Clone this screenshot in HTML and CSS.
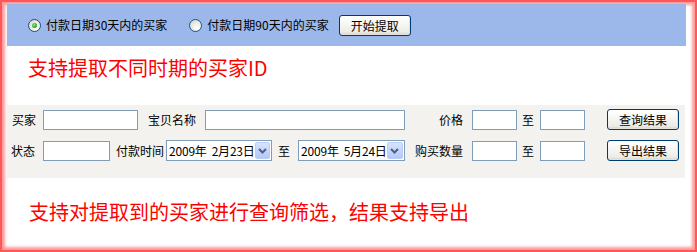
FILE: index.html
```html
<!DOCTYPE html>
<html lang="zh">
<head>
<meta charset="utf-8">
<link rel="stylesheet" href="styles.css">
</head>
<body>
<div class="frame">
  <div class="header">
    <label class="radio-item first">
      <span class="radio checked"><span class="dot"></span></span>
      <span class="rlabel">付款日期30天内的买家</span>
    </label>
    <label class="radio-item second">
      <span class="radio"></span>
      <span class="rlabel">付款日期90天内的买家</span>
    </label>
    <button class="btn start">开始提取</button>
  </div>
  <div class="note note-top">支持提取不同时期的买家ID</div>
  <div class="panel">
    <div class="row">
      <span class="lbl l-buyer">买家</span>
      <span class="input w95 ml7"></span>
      <span class="lbl ml10">宝贝名称</span>
      <span class="input w200 ml9"></span>
      <span class="lbl ml34">价格</span>
      <span class="input w45 ml9"></span>
      <span class="lbl ml5">至</span>
      <span class="input w45 ml6"></span>
      <button class="btn ml22">查询结果</button>
    </div>
    <div class="row">
      <span class="lbl l-status">状态</span>
      <span class="input w67 ml8"></span>
      <span class="lbl ml6">付款时间</span>
      <span class="select w106 ml2"><span class="val">2009年&nbsp;&nbsp;2月23日</span><span class="drop"><svg width="9" height="6" viewBox="0 0 9 6"><path d="M1 1 L4.5 4.5 L8 1" fill="none" stroke="#4d6185" stroke-width="2"/></svg></span></span>
      <span class="lbl ml6">至</span>
      <span class="select w107 ml8"><span class="val">2009年&nbsp;&nbsp;5月24日</span><span class="drop"><svg width="9" height="6" viewBox="0 0 9 6"><path d="M1 1 L4.5 4.5 L8 1" fill="none" stroke="#4d6185" stroke-width="2"/></svg></span></span>
      <span class="lbl ml10">购买数量</span>
      <span class="input w45 ml9"></span>
      <span class="lbl ml5">至</span>
      <span class="input w45 ml6"></span>
      <button class="btn ml22">导出结果</button>
    </div>
  </div>
  <div class="note note-bottom">支持对提取到的买家进行查询筛选，结果支持导出</div>
</div>
</body>
</html>
```
FILE: styles.css
```css
html, body {
  margin: 0;
  padding: 0;
  background: #ffffff;
}
body {
  font-family: "Noto Sans CJK SC", "DejaVu Sans", sans-serif;
  font-size: 12px;
  color: #000;
}
.frame {
  width: 697px;
  height: 252px;
  box-sizing: border-box;
  padding: 4px 11px 0 7px;
  background: #fff;
  box-shadow: inset 0 0 0 2px #ff5757, inset 0 0 3px 5px rgba(255, 120, 120, 0.75);
  overflow: hidden;
}
.header {
  height: 42px;
  background: #9cb8ea;
  display: flex;
  align-items: center;
  padding-left: 21px;
}
.radio-item {
  display: flex;
  align-items: center;
}
.second {
  margin-left: 22px;
}
.radio {
  width: 11px;
  height: 11px;
  border: 1px solid #1c5180;
  border-radius: 50%;
  background: radial-gradient(circle at 65% 70%, #ffffff 0%, #ecebe4 45%, #d4d2c8 100%);
  display: flex;
  align-items: center;
  justify-content: center;
}
.radio .dot {
  width: 5px;
  height: 5px;
  border-radius: 50%;
  background: radial-gradient(circle at 40% 40%, #8ee88e 0%, #21a121 70%, #1a8a1a 100%);
}
.rlabel {
  margin-left: 5px;
  line-height: 14px;
}
.btn {
  font-family: "Noto Sans CJK SC", "DejaVu Sans", sans-serif;
  font-size: 12px;
  color: #000;
  width: 72px;
  height: 21px;
  padding: 0;
  border: 1px solid #003c74;
  border-radius: 3px;
  background: linear-gradient(#ffffff 0%, #f7f7f3 40%, #ecebe6 85%, #d6d0c5 100%);
  box-shadow: inset -1px -1px 0 #e3e0d8;
  line-height: 19px;
  flex: none;
}
.start {
  margin-left: 10px;
}
.note {
  color: #ff0000;
  font-size: 20px;
  line-height: 24px;
  padding-left: 21px;
}
.note-top {
  height: 49px;
  padding-top: 10px;
}
.note-bottom {
  margin-top: 22px;
  padding-left: 22px;
}
.panel {
  width: 678px;
  height: 73px;
  box-sizing: border-box;
  background: #f3f2ef;
  padding: 4px 0 0 0;
}
.row {
  display: flex;
  align-items: center;
  height: 21px;
}
.row + .row {
  margin-top: 10px;
}
.lbl {
  flex: none;
  white-space: nowrap;
  line-height: 14px;
}
.l-buyer { margin-left: 5px; }
.l-status { margin-left: 4px; }
.input {
  flex: none;
  height: 20px;
  box-sizing: border-box;
  border: 1px solid #7f9db9;
  background: #fff;
}
.select {
  flex: none;
  height: 21px;
  box-sizing: border-box;
  border: 1px solid #7f9db9;
  background: #fff;
  display: flex;
  align-items: center;
  justify-content: space-between;
  padding: 0 1px 0 2px;
}
.select .val {
  white-space: nowrap;
  line-height: 14px;
  letter-spacing: -0.2px;
}
.drop {
  width: 17px;
  height: 17px;
  box-sizing: border-box;
  border: 1px solid #b9cdf6;
  border-radius: 2px;
  background: linear-gradient(#d8e4fc 0%, #c1d3fb 60%, #b3c8f6 100%);
  display: flex;
  align-items: center;
  justify-content: center;
}
.w45 { width: 45px; }
.w67 { width: 67px; }
.w95 { width: 95px; }
.w200 { width: 200px; }
.w106 { width: 106px; }
.w107 { width: 107px; }
.ml2 { margin-left: 2px; }
.ml5 { margin-left: 5px; }
.ml6 { margin-left: 6px; }
.ml7 { margin-left: 7px; }
.ml8 { margin-left: 8px; }
.ml9 { margin-left: 9px; }
.ml10 { margin-left: 10px; }
.ml22 { margin-left: 22px; }
.ml34 { margin-left: 34px; }
```
